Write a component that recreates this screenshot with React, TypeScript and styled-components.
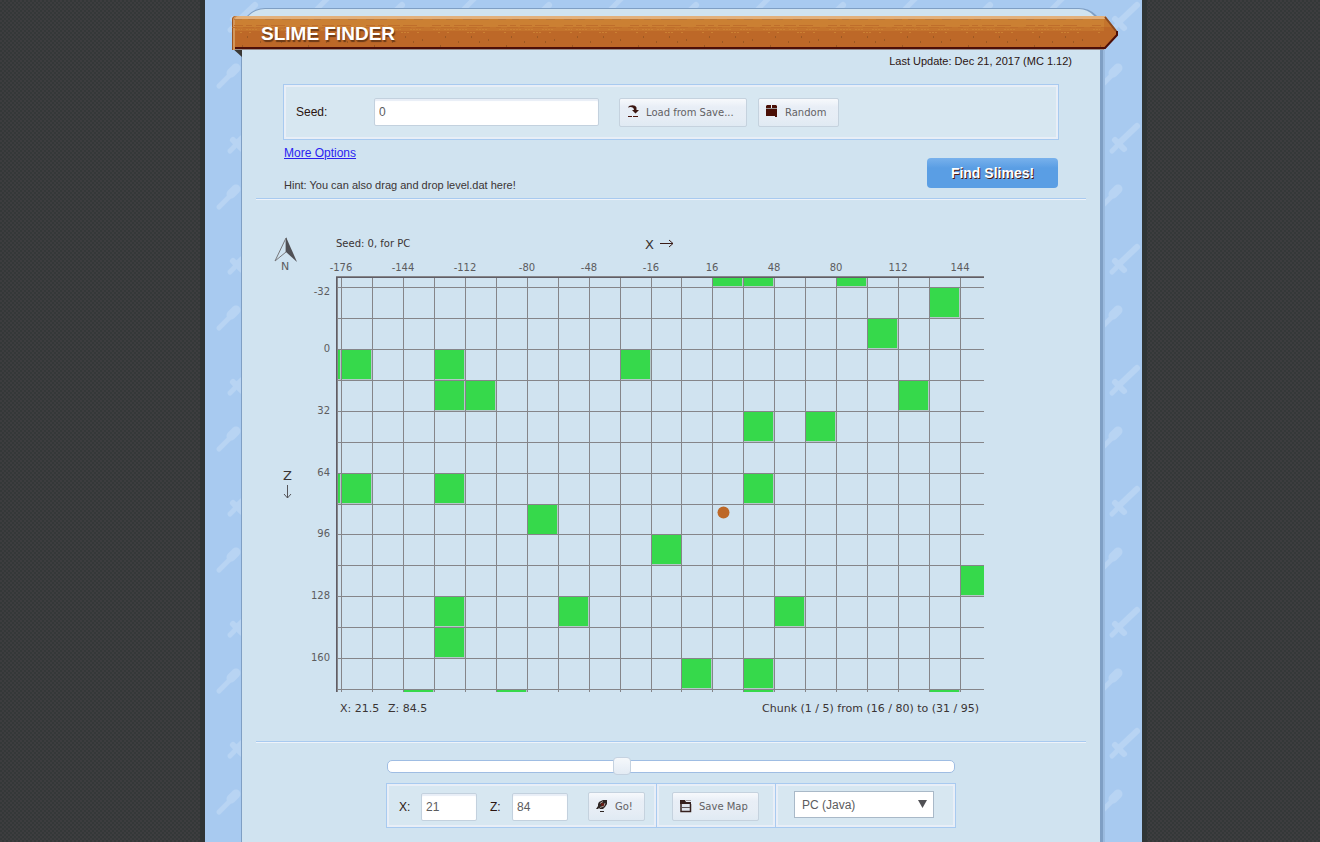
import React, { useState } from "react";
import styled, { createGlobalStyle } from "styled-components";

const color = {
  panel: "#d0e3f0",
  sky: "#a8caf0",
  box: "#d7e7f1",
  pale: "#e8eef7",
  edge: "#7f9fc4",
  ink: "#2b1410",
  grey: "#5c5c5e",
  line: "#858589",
  slime: "#36d94b",
  wood: "#bd6828",
};
const sans = `"Liberation Sans", Arial, sans-serif`;
const wide = `"DejaVu Sans", Verdana, sans-serif`;

const GlobalStyle = createGlobalStyle`
  * { box-sizing: border-box; }
  body {
    margin: 0;
    font-family: ${sans};
    font-size: 12px;
    line-height: 16px;
    color: ${color.ink};
    background:
      conic-gradient(#343838 25%, transparent 0 50%, #343838 0 75%, transparent 0) 0 0 / 4px 4px,
      #3d3d3f;
  }
`;

const Page = styled.div`
  padding-left: 27px;
`;

const Sky = styled.div`
  position: relative;
  display: flex;
  max-width: 937px;
  min-height: 100vh;
  margin: 0 auto;
  padding: 8px 39px 0 36px;
  background: ${color.sky};
  box-shadow: 0 0 0 5px #303535;
`;

const SkyPattern = styled.svg`
  position: absolute;
  inset: 0;
  width: 100%;
  height: 100%;
`;

const Panel = styled.main`
  position: relative;
  flex: 1;
  min-width: 0;
  background: ${color.panel};
  border: 1px solid ${color.edge};
  border-right-width: 3px;
  border-bottom: 0;
  border-radius: 24px 24px 0 0;
  box-shadow: 2px 2px 0 #9bbbdf;
  padding-top: 7px;
`;

const Banner = styled.header`
  position: relative;
  display: flex;
  height: 34px;
  margin: 0 -18px 0 -10px;
`;

const BannerBar = styled.div`
  position: relative;
  flex: 1;
  border-radius: 4px 0 0 0;
  overflow: hidden;
  background: linear-gradient(#e3b07a 0 3px, #cb8033 3px 11px, #c4742d 11px 15px, ${color.wood} 15px 31px, #4d0f08 31px 33px, #978c8a 33px);
  box-shadow: inset 1px 0 0 #9c5320, inset 3px 0 0 #d3965a;
`;

const Grain = styled.svg`
  position: absolute;
  inset: 0;
  width: 100%;
  height: 100%;
`;

const Title = styled.h1`
  position: relative;
  margin: 0;
  padding-left: 29px;
  font-size: 19px;
  line-height: 36px;
  font-weight: bold;
  color: #fff;
  text-shadow: 1px 2px 1px #6b3a18;
`;

const Fold = styled.svg`
  position: absolute;
  left: 0;
  top: 32px;
`;

const Updated = styled.p`
  margin: 3px 28px 0;
  text-align: right;
  font-size: 11px;
`;

const Form = styled.form`
  margin: 15px 41px 0;
`;

const SeedBox = styled.div`
  display: flex;
  align-items: center;
  height: 56px;
  padding: 0 10px;
  background: ${color.box};
  border: 1px solid ${color.sky};
  box-shadow: inset 0 0 0 2px ${color.pale};
`;

const Label = styled.label<{ $width: number }>`
  flex: none;
  width: ${(p) => p.$width}px;
  padding-left: 2px;
`;

const TextInput = styled.input<{ $width: number }>`
  width: ${(p) => p.$width}px;
  height: 28px;
  padding: 0 4px;
  border: 1px solid #c3d1de;
  border-radius: 2px;
  background: #fff;
  box-shadow: inset 0 2px 1px ${color.pale};
  font: 12px ${sans};
  color: ${color.grey};
`;

const SmallButton = styled.button<{ $left: number; $width: number }>`
  display: flex;
  align-items: center;
  gap: 7px;
  width: ${(p) => p.$width}px;
  height: 29px;
  margin-left: ${(p) => p.$left}px;
  padding: 0 0 0 7px;
  border: 1px solid #c5d2de;
  border-radius: 2px;
  background: linear-gradient(#f7f9fc, #e8eef6 30%, #e6edf5 70%, #e0eaf3);
  font: 10px ${wide};
  color: #626164;
  white-space: nowrap;
  cursor: pointer;
`;

const FormFoot = styled.div`
  display: flex;
  justify-content: space-between;
  align-items: flex-start;
  padding: 5px 1px;
`;

const Notes = styled.div`
  font-size: 11px;
  a {
    display: block;
    margin-bottom: 16px;
    font-size: 12px;
    color: #2a1ff0;
  }
  p { margin: 0; color: #3b3434; }
`;

const FindButton = styled.button`
  width: 131px;
  height: 30px;
  margin-top: 13px;
  border: 0;
  border-radius: 4px;
  background: linear-gradient(#78b1ec, #5a9ee4 10px);
  font: bold 14px ${sans};
  color: #fff;
  text-shadow: 1px 1px 0 #4a1a10;
  cursor: pointer;
`;

const Divider = styled.hr`
  height: 2px;
  margin: 0 14px;
  border: 0;
  background: linear-gradient(${color.sky} 50%, #eef3fa 50%);
`;

const MapSvg = styled.svg`
  display: block;
  width: calc(100% - 28px);
  margin: 0 14px;
  font-family: ${wide};
  font-size: 10px;
  fill: ${color.grey};
`;

const Controls = styled.section`
  width: 570px;
  max-width: 100%;
  margin: 14px auto 0;
`;

const Slider = styled.input`
  display: block;
  appearance: none;
  width: 568px;
  max-width: 100%;
  height: 18px;
  margin: 0 1px 8px;
  background: none;
  &::-webkit-slider-runnable-track {
    height: 13px;
    background: #fff;
    border: 1px solid #9fbde3;
    border-radius: 5px;
  }
  &::-webkit-slider-thumb {
    appearance: none;
    width: 18px;
    height: 18px;
    margin-top: -4px;
    border: 1px solid #c5d2e0;
    border-radius: 4px;
    background: linear-gradient(#f5f8fb, #e3ebf4);
  }
`;

const Toolbar = styled.div`
  display: flex;
  border: 1px solid ${color.sky};
`;

const Group = styled.div<{ $width: number }>`
  display: flex;
  align-items: center;
  flex: 0 1 ${(p) => p.$width}px;
  height: 43px;
  padding: 2px 0 0 10px;
  background: ${color.box};
  box-shadow: inset 0 0 0 2px ${color.pale};
  & + & { border-left: 1px solid ${color.sky}; }
`;

const SelectWrap = styled.div`
  position: relative;
  margin: -4px 0 0 8px;
  svg {
    position: absolute;
    right: 7px;
    top: 9px;
    pointer-events: none;
  }
`;

const Select = styled.select`
  appearance: none;
  width: 140px;
  height: 27px;
  padding: 0 7px;
  border: 1px solid #a9b9c8;
  border-radius: 0;
  background: #fff;
  font: 12px ${sans};
  color: ${color.grey};
`;

const LoadIcon = () => (
  <svg width="12" height="16" viewBox="0 0 12 16">
    <path d="M1 3.500C2 1 8 0 9.500 3.500V6H12L8.500 9.500L5 6H7C7 3.500 4 2 1 3.500Z" fill="#3b1711" />
    <path d="M1 12.500H5M6 12.500H11" stroke="#4a130a" />
  </svg>
);
const ChestIcon = () => (
  <svg width="12" height="16" viewBox="0 0 12 16">
    <path d="M1 1H5V4H0V2ZM6 1H10L11 2V4H6ZM0 5H11V13H9V12H0Z" fill="#4a0f06" />
    <path d="M0 4.500H11" stroke="#9a9494" />
  </svg>
);
const RocketIcon = () => (
  <svg width="12" height="16" viewBox="0 0 12 16">
    <path d="M11 1H7L3 3L2 5V7L0 10H2L3 9L4 10H7L9 8L11 5Z" fill="#2e2624" />
    <path d="M4 4.500L7 2.500M4 8.500L8 7L9 4" stroke="#a79a95" fill="none" />
    <circle cx="6.500" cy="5.500" r="1.500" fill="#6e1c14" />
    <path d="M4 12.500H8" stroke="#2e2624" />
  </svg>
);
const SaveIcon = () => (
  <svg width="12" height="16" viewBox="0 0 12 16">
    <path d="M1 2.500V12.500H10.500V5" fill="#dfe5ee" stroke="#35201e" strokeWidth="1.500" />
    <path d="M0 1H5L6 3H11V5H0Z" fill="#35201e" />
    <path d="M6 1.500H11" stroke="#9d989b" />
    <path d="M2 8.500H10" stroke="#5d5557" />
  </svg>
);

const STEP = 30.95;
const LEFT = 80;
const TOP = 77;
const RIGHT = 728;
const BOTTOM = 492;
const colX = (i: number) => Math.round(85 + i * STEP);
const rowY = (j: number) => Math.round(87 + j * 30.93);
const slimes: [number, number][] = [
  [12, -1], [13, -1], [16, -1], [19, 0], [17, 1], [-1, 2], [0, 2], [3, 2], [9, 2],
  [3, 3], [4, 3], [18, 3], [13, 4], [15, 4], [-1, 6], [0, 6], [3, 6], [13, 6],
  [6, 7], [10, 8], [20, 9], [3, 10], [7, 10], [14, 10], [3, 11], [11, 12], [13, 12],
  [2, 13], [5, 13], [13, 13], [19, 13],
];
const range = (n: number) => Array.from({ length: n }, (_, i) => i);

const SlimeMap = () => (
  <MapSvg viewBox="0 0 830 541" role="img" aria-label="Slime chunk map">
    <defs>
      <clipPath id="plot">
        <rect x={LEFT} y={TOP - 1} width={RIGHT - LEFT} height={BOTTOM - TOP + 1} />
      </clipPath>
    </defs>
    <path d="M30 38L19 61L30 52Z" fill="none" stroke="#77777a" />
    <path d="M30 37L41 62L30 52Z" fill="#505055" />
    <text x="29" y="70" textAnchor="middle" fontSize="11">N</text>
    <text x="80" y="47" fill="#3a3434">Seed: 0, for PC</text>
    <text x="389" y="49" fontSize="13" fill="#3a3434">X</text>
    <path d="M404 43.500H417M413 40L417 43.500L413 47" fill="none" stroke="#3a1c18" />
    <text x="27" y="280" fontSize="13" fill="#3a3434">Z</text>
    <path d="M31.500 285V298M28 294L31.500 298L35 294" fill="none" stroke="#55555a" />
    {range(11).map((i) => (
      <text key={i} x={colX(i * 2)} y="71" textAnchor="middle">{-176 + i * 32}</text>
    ))}
    {range(7).map((j) => (
      <text key={j} x="74" y={j === 0 ? 95 : rowY(j * 2) + 3} textAnchor="end">{-32 + j * 32}</text>
    ))}
    <g clipPath="url(#plot)">
      {slimes.map(([i, j]) => (
        <g key={`${i},${j}`}>
          <rect x={colX(i) + 1} y={rowY(j) + 1} width="30" height="30" fill="#b5c9c9" />
          <rect x={colX(i) + 1} y={rowY(j) + 1} width="29" height="29" fill={color.slime} />
        </g>
      ))}
      {range(21).map((i) => (
        <rect key={i} x={colX(i)} y={TOP} width="1" height={BOTTOM - TOP} fill={color.line} />
      ))}
      {range(14).map((j) => (
        <rect key={j} x={LEFT} y={rowY(j)} width={RIGHT - LEFT} height="1" fill={color.line} />
      ))}
      <rect x={LEFT} y={TOP} width="1" height={BOTTOM - TOP} fill="#5f5d66" />
      <rect x={LEFT + 1} y={TOP} width="1" height={BOTTOM - TOP} fill={color.line} />
      <rect x={LEFT} y={TOP - 1} width={RIGHT - LEFT} height="1" fill={color.line} />
      <rect x={LEFT} y={TOP} width={RIGHT - LEFT} height="1" fill="#5f5d66" />
    </g>
    <circle cx="467.500" cy="312.500" r="6" fill={color.wood} />
    <text x="84" y="512" fontSize="11" fill="#3a3434">X: 21.5</text>
    <text x="132" y="512" fontSize="11" fill="#3a3434">Z: 84.5</text>
    <text x="723" y="512" fontSize="11" fill="#3a3434" textAnchor="end">
      Chunk (1 / 5) from (16 / 80) to (31 / 95)
    </text>
  </MapSvg>
);

export default function App() {
  const [seed, setSeed] = useState("0");
  const [x, setX] = useState("21");
  const [z, setZ] = useState("84");
  const [zoom, setZoom] = useState(41);

  return (
    <Page>
      <GlobalStyle />
      <Sky>
        <SkyPattern aria-hidden="true">
          <defs>
            <pattern id="tools" width="147" height="121" patternUnits="userSpaceOnUse">
              <g stroke="#b8d4f3" fill="none" strokeLinecap="round">
                <path d="M25 30L29 26" strokeWidth="5" />
                <path d="M31 23L50 5" strokeWidth="6" />
                <path d="M28 19L37 28" strokeWidth="6" />
                <path d="M14 86L26 74" strokeWidth="5" />
                <path d="M26 73L31 68" strokeWidth="9" />
                <path d="M112 9L124 -3" strokeWidth="5" />
              </g>
            </pattern>
          </defs>
          <rect width="100%" height="100%" fill="url(#tools)" />
        </SkyPattern>
        <Panel>
          <Banner>
            <Fold width="10" height="10" aria-hidden="true">
              <path d="M0 0H10V9Z" fill="#3a3835" />
            </Fold>
            <BannerBar>
              <Grain aria-hidden="true">
                <defs>
                  <pattern id="grain" width="66" height="34" patternUnits="userSpaceOnUse">
                    <path d="M2 9.500h9m3 0h6m4 0h12m3 0h14M0 11.500h5m6 0h11m2 0h4m9 0h10m5 0h8" stroke="#bf6e2b" />
                    <path d="M3 13.500h7m4 0h12m3 0h9m8 0h11M8 16.500h3m6 0h2m18 0h9m7 0h2" stroke="#cb8033" strokeDasharray="2 1" />
                    <path d="M2 3.500h8m6 0h7m10 0h9m8 0h9" stroke="#bd7a3d" />
                    <path d="M15 21h1m25 0h1m16 3h1m-31 2h1m20 0h1m-40 4h1" stroke="#7c481c" />
                  </pattern>
                </defs>
                <rect width="100%" height="100%" fill="url(#grain)" />
              </Grain>
              <Title>SLIME FINDER</Title>
            </BannerBar>
            <svg width="14" height="34" aria-hidden="true">
              <path d="M0 0H1L13 15V19L1 33H0Z" fill={color.wood} />
              <path d="M0 3H3L9 11H0Z" fill="#c4742d" />
              <path d="M0 1.500H1" stroke="#e3b07a" strokeWidth="3" />
              <path d="M1 1L12 15" stroke="#8a4a20" strokeWidth="2" fill="none" />
              <path d="M0 32H1L13 19V15" stroke="#4d0f08" strokeWidth="2" fill="none" />
            </svg>
          </Banner>
          <Updated>Last Update: Dec 21, 2017 (MC 1.12)</Updated>
          <Form onSubmit={(e) => e.preventDefault()}>
            <SeedBox>
              <Label htmlFor="seed" $width={80}>Seed:</Label>
              <TextInput id="seed" $width={225} value={seed} onChange={(e) => setSeed(e.target.value)} />
              <SmallButton type="button" $left={20} $width={128}><LoadIcon />Load from Save...</SmallButton>
              <SmallButton type="button" $left={11} $width={81}><ChestIcon />Random</SmallButton>
            </SeedBox>
            <FormFoot>
              <Notes>
                <a href="#options">More Options</a>
                <p>Hint: You can also drag and drop level.dat here!</p>
              </Notes>
              <FindButton type="submit">Find Slimes!</FindButton>
            </FormFoot>
          </Form>
          <Divider />
          <SlimeMap />
          <Divider />
          <Controls>
            <Slider type="range" aria-label="Zoom" value={zoom} onChange={(e) => setZoom(Number(e.target.value))} />
            <Toolbar>
              <Group $width={269}>
                <Label htmlFor="goto-x" $width={24}>X:</Label>
                <TextInput id="goto-x" $width={56} value={x} onChange={(e) => setX(e.target.value)} />
                <Label as="span" $width={11} />
                <Label htmlFor="goto-z" $width={24}>Z:</Label>
                <TextInput id="goto-z" $width={56} value={z} onChange={(e) => setZ(e.target.value)} />
                <SmallButton type="button" $left={20} $width={57}><RocketIcon />Go!</SmallButton>
              </Group>
              <Group $width={119}>
                <SmallButton type="button" $left={5} $width={87}><SaveIcon />Save Map</SmallButton>
              </Group>
              <Group $width={180}>
                <SelectWrap>
                  <Select aria-label="Platform">
                    <option>PC (Java)</option>
                  </Select>
                  <svg width="9" height="9" aria-hidden="true">
                    <path d="M0 0H9L4.500 8Z" fill="#505054" />
                  </svg>
                </SelectWrap>
              </Group>
            </Toolbar>
          </Controls>
        </Panel>
      </Sky>
    </Page>
  );
}
